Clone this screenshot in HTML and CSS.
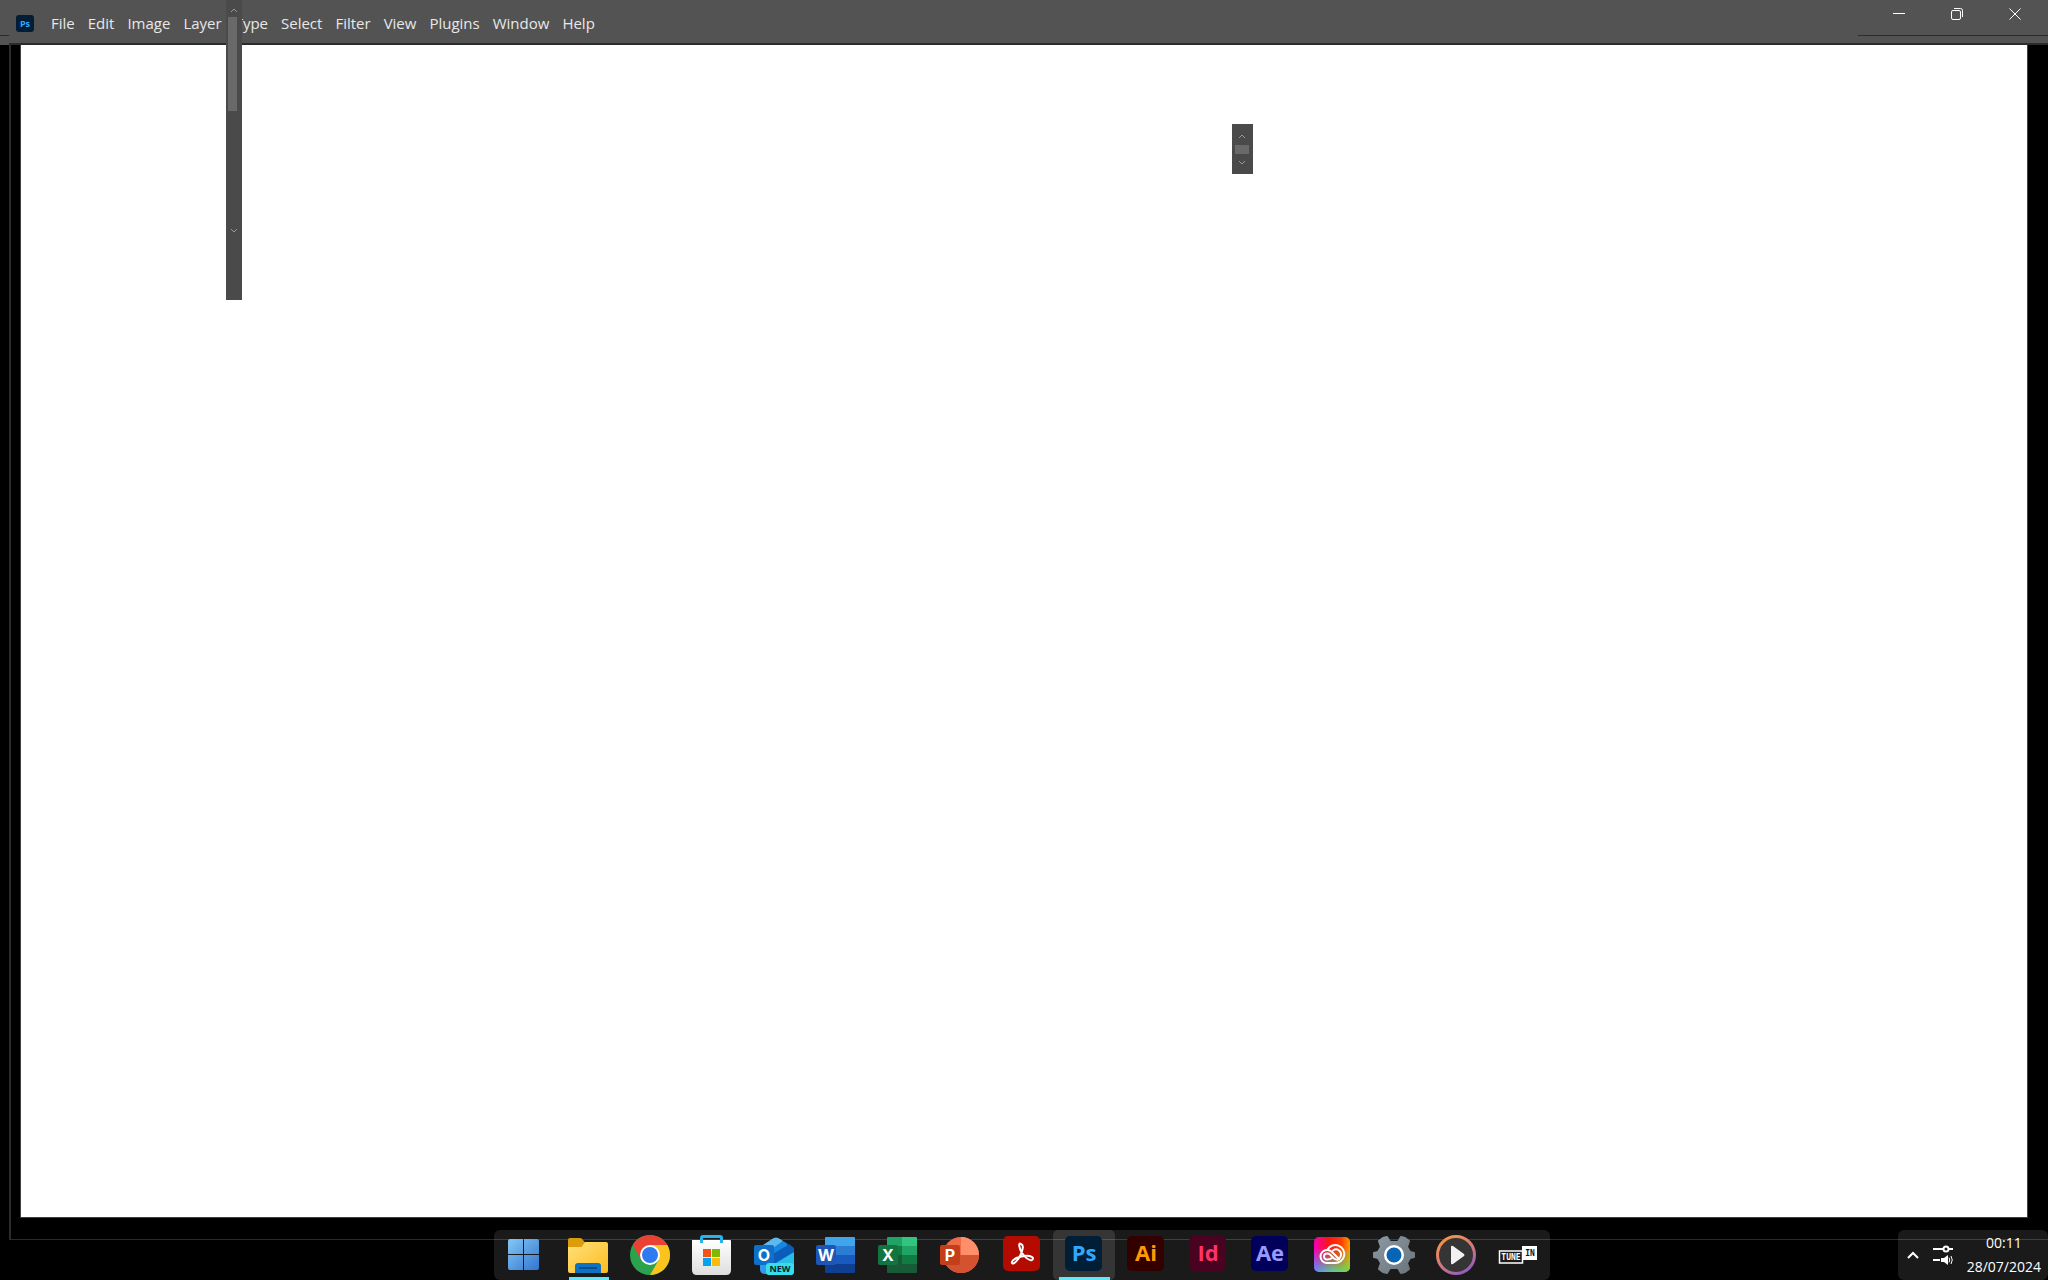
FILE: index.html
```html
<!DOCTYPE html>
<html lang="en">
<head>
<meta charset="utf-8">
<title>Photoshop</title>
<link rel="stylesheet" href="styles.css">
</head>
<body>
<header class="titlebar">
  <svg class="app-logo" viewBox="0 0 18 17" aria-hidden="true"><rect width="18" height="17" rx="3" fill="#001e36"/><text x="9" y="12" class="logo-text" fill="#31a8ff">Ps</text></svg>
  <nav class="menu" aria-label="Main menu">
    <button>File</button><button>Edit</button><button>Image</button><button>Layer</button><button>Type</button><button>Select</button><button>Filter</button><button>View</button><button>Plugins</button><button>Window</button><button>Help</button>
  </nav>
  <div class="window-controls">
    <button aria-label="Minimize"><svg viewBox="0 0 14 14"><path d="M1 6.500h12"/></svg></button>
    <button aria-label="Restore"><svg viewBox="0 0 14 14"><rect x="1.500" y="3.500" width="9" height="9" rx="1.500"/><path d="M4 1.500h6.500a2 2 0 0 1 2 2V10"/></svg></button>
    <button aria-label="Close"><svg viewBox="0 0 14 14"><path d="M1.500 1.500l11 11M12.500 1.500l-11 11"/></svg></button>
  </div>
</header>
<main class="frame"><div class="canvas"></div></main>

<div class="scroller scroller-tall" aria-hidden="true">
  <svg viewBox="0 0 8 5"><path d="M1 4l3-3 3 3"/></svg>
  <div class="thumb"></div>
  <svg viewBox="0 0 8 5"><path d="M1 1l3 3 3-3"/></svg>
</div>
<div class="scroller scroller-short" aria-hidden="true">
  <svg viewBox="0 0 8 5"><path d="M1 4l3-3 3 3"/></svg>
  <div class="thumb"></div>
  <svg viewBox="0 0 8 5"><path d="M1 1l3 3 3-3"/></svg>
</div>

<footer class="taskbar">
  <nav class="apps" aria-label="Taskbar">
    <button class="start" aria-label="Start"><svg viewBox="0 0 62 50">
      <defs><linearGradient id="win" gradientUnits="userSpaceOnUse" x1="16" y1="9" x2="46" y2="40"><stop offset="0" stop-color="#84c8f5"/><stop offset="1" stop-color="#3476cf"/></linearGradient></defs>
      <path fill="url(#win)" d="M18 9h13v15H16V11q0-2 2-2zM32 9h13q2 0 2 2v13H32zM16 25h15v15H18q-2 0-2-2zM32 25h15v13q0 2-2 2H32z"/></svg></button>
    <button aria-label="File Explorer"><svg viewBox="0 0 62 50">
      <defs><linearGradient id="fold" x1="0" y1="0" x2="1" y2="1"><stop offset="0" stop-color="#ffe17b"/><stop offset="1" stop-color="#fdbb20"/></linearGradient></defs>
      <path fill="#dc9c0c" d="M11 10q0-2 2-2h10q2 0 3 2l3 4-5 3H11z"/><path fill="url(#fold)" d="M11 17h12q2 0 3-2l2-3h21q2 0 2 2v27q0 2-2 2H13q-2 0-2-2z"/>
      <path fill="#0d72c4" d="M18 43v-7q0-3 3-3h20q3 0 3 3v7z"/><path stroke="#084c8c" stroke-width="2" d="M22 38h18"/><path fill="#60e8f8" d="M12 47h40v3H12z"/></svg></button>
    <button aria-label="Chrome"><svg viewBox="0 0 62 50">
      <circle cx="31" cy="25" r="20" fill="#2ba24c"/><path fill="#e94235" d="M13.700 15A20 20 0 0 1 48.300 15L31 15l-8.700 15z"/><path fill="#fcc31e" d="M48.300 15A20 20 0 0 1 31 45l8.700-15L31 15z"/><circle cx="31" cy="25" r="10" fill="#fff"/><circle cx="31" cy="25" r="8" fill="#2d7bee"/></svg></button>
    <button aria-label="Microsoft Store"><svg viewBox="0 0 62 50">
      <defs><linearGradient id="bag" x1="0" y1="0" x2="0" y2="1"><stop offset="0" stop-color="#fff"/><stop offset="1" stop-color="#dedede"/></linearGradient></defs>
      <path fill="url(#bag)" d="M11 10h38q1 0 1 1v29q0 5-5 5H16q-5 0-5-5z"/><path fill="none" stroke="#27b4e8" stroke-width="3" d="M20.500 13V8q0-1.500 1.500-1.500h17q1.500 0 1.500 1.500v5"/>
      <path fill="#f1511b" d="M22 19h8v8h-8z"/><path fill="#80b900" d="M31 19h8v8h-8z"/><path fill="#05a3ee" d="M22 28h8v8h-8z"/><path fill="#fbbc09" d="M31 28h8v8h-8z"/></svg></button>
    <button aria-label="Outlook"><svg viewBox="0 0 62 50">
      <path fill="#3499e6" d="M17 18l12-8q4-3 8 0l14 9v20q0 5-5 5H22q-5 0-5-5z"/><path fill="#5fb8f0" d="M20 15l9-6q4-3 8 0l3 2-12 8z"/><path fill="#1687dc" d="M28 20l12-9 5 3-17 11z"/><path fill="#0a5dba" d="M28 25l18-11 5 4v5L28 37z"/><path fill="#28bde5" d="M28 36l23-14v15H28z"/>
      <rect x="11" y="15" width="20" height="20" rx="2" fill="#0f6fc9"/><text x="21" y="31" class="office">O</text><rect x="23" y="33" width="28" height="12" rx="3" fill="#37ddeb"/><text x="37" y="42" class="new-badge">NEW</text></svg></button>
    <button aria-label="Word"><svg viewBox="0 0 62 50">
      <path fill="#41a5ee" d="M21 7h28q1 0 1 1v8H20V8q0-1 1-1z"/><path fill="#2b7cd3" d="M20 16h30v9H20z"/><path fill="#185abd" d="M20 25h30v9H20z"/><path fill="#103f91" d="M20 34h30v8q0 1-1 1H21q-1 0-1-1z"/><rect x="11" y="15" width="20" height="20" rx="2" fill="#1e56b8"/><text x="21" y="31" class="office">W</text></svg></button>
    <button aria-label="Excel"><svg viewBox="0 0 62 50">
      <path fill="#21a366" d="M21 7h14v9H20V8q0-1 1-1z"/><path fill="#33c481" d="M35 7h14q1 0 1 1v8H35z"/><path fill="#107c41" d="M20 16h15v9H20z"/><path fill="#21a366" d="M35 16h15v9H35z"/><path fill="#107c41" d="M35 25h15v9H35z"/><path fill="#185c37" d="M20 25h15v9h15v8q0 1-1 1H21q-1 0-1-1z"/><rect x="11" y="15" width="20" height="20" rx="2" fill="#127440"/><text x="21" y="31" class="office">X</text></svg></button>
    <button aria-label="PowerPoint"><svg viewBox="0 0 62 50">
      <circle cx="32" cy="25" r="18" fill="#ed6c47"/><path fill="#ff8f6b" d="M32 7a18 18 0 0 1 18 18H32z"/><path fill="#d35230" d="M14 25h36a18 18 0 0 1-36 0z"/><rect x="11" y="15" width="20" height="20" rx="2" fill="#c43e1c"/><text x="21" y="31" class="office">P</text></svg></button>
    <button aria-label="Acrobat"><svg viewBox="0 0 62 50"><rect x="12" y="6" width="37" height="35" rx="5" fill="#b30b00"/><path fill="none" stroke="#fff" stroke-width="2" d="M30 14c-3-2-2 4 1 9 3 4 7 8 10 7 3-2-1-5-8-4-8 1-13 5-12 7 1 2 6-2 9-9 2-5 3-9 0-10z"/></svg></button>
    <button class="active" aria-label="Photoshop"><svg viewBox="0 0 62 50"><rect x="12" y="6" width="37" height="35" rx="5" fill="#001e36"/><text x="31" y="31" class="adobe" fill="#31a8ff">Ps</text><path fill="#60e8f8" d="M6 47h51v3H6z"/></svg></button>
    <button aria-label="Illustrator"><svg viewBox="0 0 62 50"><rect x="12" y="6" width="37" height="35" rx="5" fill="#330000"/><text x="31" y="31" class="adobe" fill="#ff9a00">Ai</text></svg></button>
    <button aria-label="InDesign"><svg viewBox="0 0 62 50"><rect x="12" y="6" width="37" height="35" rx="5" fill="#49021f"/><text x="31" y="31" class="adobe" fill="#ff3366">Id</text></svg></button>
    <button aria-label="After Effects"><svg viewBox="0 0 62 50"><rect x="12" y="6" width="37" height="35" rx="5" fill="#00005b"/><text x="31" y="31" class="adobe" fill="#9999ff">Ae</text></svg></button>
    <button aria-label="Creative Cloud"><svg viewBox="0 0 62 50">
      <defs><linearGradient id="cc1" x1="0" y1="0" x2="1" y2="0"><stop offset="0" stop-color="#f400b8"/><stop offset=".4" stop-color="#fb1515"/><stop offset=".75" stop-color="#ff3c00"/><stop offset="1" stop-color="#ff9d00"/></linearGradient><linearGradient id="cc2" x1="0" y1="0" x2="1" y2="0"><stop offset="0" stop-color="#5b8dff"/><stop offset=".5" stop-color="#5bc8a0"/><stop offset="1" stop-color="#74e03a"/></linearGradient><linearGradient id="fade" x1="0" y1="0" x2="0" y2="1"><stop offset=".3" stop-color="#000"/><stop offset="1" stop-color="#fff"/></linearGradient><mask id="down"><rect x="13" y="7" width="36" height="35" fill="url(#fade)"/></mask></defs>
      <rect x="13" y="7" width="36" height="35" rx="5" fill="url(#cc1)"/><rect x="13" y="7" width="36" height="35" rx="5" fill="url(#cc2)" mask="url(#down)"/>
      <g fill="none" stroke="#fff" stroke-width="2" stroke-linecap="round"><path d="M26 33H34a9 9 0 1 0-7.500-13.500"/><path d="M26 33a6.500 6.500 0 1 1 0-13q3 0 5 2l7 7"/><path d="M31 28q-2 1.500-5 1.500a3 3 0 0 1 0-6q2 0 3 1l4 4q4 3 6-1a5 5 0 0 0-7-7"/></g></svg></button>
    <button aria-label="Settings"><svg viewBox="0 0 62 50">
      <defs><linearGradient id="gear" x1="0" y1="0" x2="1" y2="1"><stop offset="0" stop-color="#8b98a2"/><stop offset="1" stop-color="#6b747c"/></linearGradient></defs>
      <path fill="url(#gear)" stroke="url(#gear)" stroke-width="2" stroke-linejoin="round" d="M20 8l4-1 3 5h8l3-5 4 1 4 3-2 6 3 5 4 1v4l-4 1-3 5 2 6-4 3-4 1-3-5h-8l-3 5-4-1-4-3 2-6-3-5-4-1v-4l4-1 3-5-2-6z"/><circle cx="31" cy="25" r="10" fill="#fff"/><circle cx="31" cy="25" r="7.500" fill="#0864b5"/></svg></button>
    <button aria-label="Media Player"><svg viewBox="0 0 62 50">
      <defs><linearGradient id="ring" x1=".2" y1="0" x2=".8" y2="1"><stop offset="0" stop-color="#f79348"/><stop offset=".5" stop-color="#d77a7b"/><stop offset="1" stop-color="#8a5bc3"/></linearGradient></defs>
      <circle cx="31" cy="25" r="18.500" fill="#353535" stroke="url(#ring)" stroke-width="3"/><path fill="#f2f2f2" d="M26 17q0-2 2-1l11 8q1 1 0 2l-11 8q-2 1-2-1z"/></svg></button>
    <button aria-label="TuneIn"><svg viewBox="0 0 62 50"><rect x="12.500" y="21" width="23" height="12" fill="#1a1a1a" stroke="#fff" stroke-width="1.500"/><text x="24" y="30" class="tune" fill="#fff">TUNE</text><rect x="35" y="16" width="15" height="14" fill="#fff"/><text x="43" y="26" class="tune" fill="#111">IN</text></svg></button>
  </nav>
  <div class="tray">
    <button aria-label="Show hidden icons"><svg class="chevron" viewBox="0 0 12 8"><path d="M1 7l5-5 5 5"/></svg></button>
    <button aria-label="Quick settings"><svg class="quick" viewBox="0 0 20 22"><path stroke-width="2" d="M0 5h10M16 5h4M0 16h7"/><circle cx="13" cy="5" r="2.500" stroke-width="2"/><path fill="#fff" stroke="none" d="M8 14h3l4-3v10l-4-3H8z"/><path d="M16 13.500q1.500 2.500 0 5M18 12q2.500 4 0 8"/></svg></button>
    <button class="clock"><time>00:11</time><time>28/07/2024</time></button>
  </div>
</footer>
</body>
</html>
```
FILE: styles.css
```css
* { box-sizing: border-box; }
body {
  margin: 0;
  min-height: 100vh;
  display: flex;
  flex-direction: column;
  position: relative;
  overflow: hidden;
  background: #000;
  font-family: "Open Sans", "Noto Sans", sans-serif;
}
button {
  margin: 0;
  padding: 0;
  border: 0;
  background: none;
  color: inherit;
  font: inherit;
}
svg { display: block; }

.titlebar {
  display: flex;
  height: 45px;
  padding: 0 4px 0 16px;
  position: relative;
  background: #535353;
  color: #e8e8e8;
}
.titlebar::before, .titlebar::after {
  content: "";
  position: absolute;
  top: 35px;
  height: 1px;
  background: #2c2c2c;
}
.titlebar::before { left: 0; width: 9px; }
.titlebar::after { right: 0; width: 190px; }
.app-logo { width: 18px; height: 17px; margin-top: 15px; }
.logo-text { font-size: 9px; font-weight: 700; text-anchor: middle; }
.menu {
  display: flex;
  gap: 13px;
  margin: 13px 0 0 17px;
  height: 20px;
  font-size: 15px;
  line-height: 20px;
}
.window-controls { display: flex; margin-left: auto; height: 28px; }
.window-controls button { width: 58px; display: grid; place-items: center; }
.window-controls svg { width: 14px; height: 14px; fill: none; stroke: #fff; }

.frame {
  flex: 1;
  display: flex;
  margin: -2px 0 0 9px;
  border: solid #2b2b2b;
  border-width: 2px 0 1px 2px;
  position: relative;
}
.canvas {
  flex: 1;
  margin: 0 20px 21px 9px;
  border: 1px solid #404040;
  border-top: 0;
  background: #fff;
}

.scroller {
  position: absolute;
  display: flex;
  flex-direction: column;
  background: #4a4a4a;
}
.scroller svg { width: 8px; height: 5px; fill: none; stroke: #999; }
.thumb { background: #696969; }
.scroller-tall { left: 226px; top: 0; width: 16px; height: 300px; padding: 8px 0 0 2px; }
.scroller-tall svg { margin-left: 2px; }
.scroller-tall .thumb { width: 9px; height: 94px; margin: 4px 0 117px; }
.scroller-short { left: 1232px; top: 124px; width: 21px; height: 50px; padding: 10px 1px 0 0; align-items: center; }
.scroller-short .thumb { width: 14px; height: 9px; margin: 6px 0; }

.taskbar {
  display: grid;
  grid-template-columns: 1fr auto 1fr;
  margin-top: -10px;
  height: 50px;
  position: relative;
}
.apps, .tray { background: rgba(255, 255, 255, .1); border-radius: 6px; }
.apps {
  grid-column: 2;
  display: flex;
  width: 1056px;
  margin-right: 4px;
}
.apps button { width: 62px; flex: none; }
.apps .start { width: 60px; margin-right: 3px; }
.apps .start svg { margin-left: -2px; }
.apps svg { width: 62px; height: 50px; }
.active { border-radius: 5px; background: rgba(255, 255, 255, .12); }
.adobe { font-size: 22px; font-weight: 700; text-anchor: middle; }
.office { font: 700 16px Inter, sans-serif; text-anchor: middle; fill: #fff; }
.new-badge { font-size: 9px; font-weight: 700; text-anchor: middle; fill: #08262c; }
.tune { font: 700 8px "DejaVu Sans Mono", monospace; text-anchor: middle; }
.tray {
  grid-column: 3;
  justify-self: end;
  display: flex;
  align-items: center;
  padding: 0 7px 0 9px;
  gap: 14px;
  color: #fff;
}
.tray svg { fill: none; stroke: #fff; }
.chevron { width: 12px; height: 8px; stroke-width: 2; }
.quick { width: 20px; height: 22px; }
.clock { display: flex; flex-direction: column; align-items: center; font-size: 14px; line-height: 24px; }
```
